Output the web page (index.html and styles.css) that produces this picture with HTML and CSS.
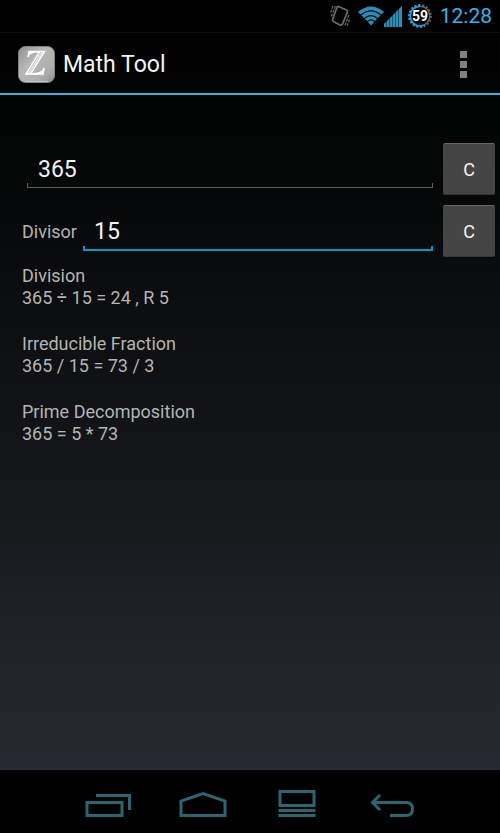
FILE: index.html
```html
<!DOCTYPE html>
<html lang="en">
<head>
    <meta charset="UTF-8">
    <meta name="viewport" content="width=device-width, initial-scale=1">
    <title>Math Tool</title>
    <link rel="stylesheet" href="styles.css">
</head>
<body>
    <!-- Status bar -->
    <div class="status-bar">
        <svg class="vibrate-icon" width="20" height="24" viewBox="0 0 20 24" fill="none" stroke="#6a6a6a">
            <path d="M8.5 2.5 L16.500 6 Q18 7 17.500 8 L12.500 20 Q11.500 21.500 10 21 L3.500 17.500 Q2 16.500 2.500 15.500 L7 3.500 Q7.500 2 8.500 2.500Z" stroke-width="1.800"/>
            <path d="M5.500 2 L1 13 M3 2 L0.500 8.500 M19 11 L14.500 22 M19.500 15.500 L17 22" stroke-width="1.200" stroke-dasharray="3 1"/>
        </svg>
        <svg class="wifi-icon" width="26" height="20" viewBox="0 0 26 20" fill="#2a8fb8">
            <path d="M0 6 Q13 -5 26 6 L23.500 8.500 Q13 0 2.500 8.500Z"/>
            <path d="M3.300 9.300 Q13 1.500 22.700 9.300 L20 12 Q13 6 6 12Z"/>
            <path d="M6.800 12.800 Q13 7.500 19.200 12.800 L17 15 Q13 11.500 9 15Z"/>
            <path d="M9.800 15.800 Q13 13 16.200 15.800 L13 19.500Z"/>
        </svg>
        <svg class="signal-icon" width="18" height="21" viewBox="0 0 18 21" fill="#2a8fb8">
            <path d="M0 21v-3l2-2v5zM3 21v-6l2-2v8zM6 21v-9l2-2v11zM9 21v-12l2-2v14zM12 21v-15l2-2v17zM15 21v-18l3-3v21z"/>
            <path d="M0 21v-3L18 0v21z" opacity="0.6"/>
        </svg>
        <svg class="battery-icon" width="24" height="24" viewBox="0 0 24 24" fill="none">
            <circle cx="12" cy="12" r="9.800" stroke="#666" stroke-width="1.400"/>
            <circle cx="12" cy="12" r="11" stroke="#666" stroke-width="1.800" stroke-dasharray="2 1.840"/>
            <path d="M12 2.200 A9.800 9.800 0 0 0 12 21.800 Q15 21.800 17 20.500" stroke="#1a9fd8" stroke-width="1.400"/>
            <path d="M12 1 A11 11 0 0 0 12 23 A11 11 0 0 0 17 21.800" stroke="#1a9fd8" stroke-width="1.800" stroke-dasharray="2 1.840"/>
            <text class="battery-text" x="12" y="17" text-anchor="middle">59</text>
        </svg>
        <span class="clock">12:28</span>
    </div>

    <!-- Action bar -->
    <header class="action-bar">
        <svg class="app-icon" width="37" height="37" viewBox="0 0 37 37">
            <defs>
                <linearGradient id="iconFill" x1="0" y1="0" x2="1" y2="1">
                    <stop offset="0" stop-color="#919191"/>
                    <stop offset="0.4" stop-color="#b8b8b8"/>
                    <stop offset="0.75" stop-color="#adadad"/>
                    <stop offset="1" stop-color="#8c8c8c"/>
                </linearGradient>
            </defs>
            <rect x="0.500" y="0.500" width="36" height="36" rx="7" fill="url(#iconFill)" stroke="#858585"/>
            <path d="M7 35.500 H30" stroke="#c4c4c4"/>
            <!-- Double-struck Z -->
            <g fill="none" stroke="#fff">
                <path d="M10 11 L11 5.500 H26.500 L12.500 28" stroke-width="1.500"/>
                <path d="M21.500 6 L8 28 H25 L26 22" stroke-width="1.500"/>
                <path d="M24 6 L10.300 28" stroke-width="1"/>
            </g>
            <path d="M11 5 H20 V6.500 Q12.500 6.500 10 11Z M15 28.500 H25 L26.500 21.500 Q23 27 15 27Z" fill="#fff"/>
        </svg>
        <h1 class="app-title">Math Tool</h1>
        <button class="menu-button" type="button" aria-label="More options">
            <span class="menu-dot"></span>
            <span class="menu-dot"></span>
            <span class="menu-dot"></span>
        </button>
    </header>

    <main class="content">
        <div class="input-row number-row">
            <input class="field" type="text" id="number" inputmode="numeric" value="365" aria-label="Number">
            <button class="clear-button" type="button" data-clear="number">C</button>
        </div>
        <div class="input-row">
            <label class="field-label" for="divisor">Divisor</label>
            <input class="field field-active" type="text" id="divisor" inputmode="numeric" value="15">
            <button class="clear-button" type="button" data-clear="divisor">C</button>
        </div>

        <div class="results">
            <section>
                <h2>Division</h2>
                <p>365 ÷ 15 = 24 , R 5</p>
            </section>
            <section>
                <h2>Irreducible Fraction</h2>
                <p>365 / 15 = 73 / 3</p>
            </section>
            <section>
                <h2>Prime Decomposition</h2>
                <p>365 = 5 * 73</p>
            </section>
        </div>
    </main>

    <!-- Navigation bar -->
    <nav class="nav-bar">
        <button class="nav-button" type="button" aria-label="Recent apps">
            <svg width="48" height="32" viewBox="0 0 48 32">
                <path d="M3 16.500 H38 V29.500 H3Z M12 9.500 H45.500 V24"/>
            </svg>
        </button>
        <button class="nav-button" type="button" aria-label="Home">
            <svg width="48" height="32" viewBox="0 0 48 32">
                <path d="M2 29.500 V15 L24 7.500 L46 15 V29.500Z"/>
            </svg>
        </button>
        <button class="nav-button" type="button" aria-label="Menu">
            <svg width="48" height="32" viewBox="0 0 48 32">
                <path d="M7 5.500 H41 V19.500 H7Z M5.500 24.500 H42.500 M5.500 29.500 H42.500"/>
            </svg>
        </button>
        <button class="nav-button" type="button" aria-label="Back">
            <svg width="48" height="32" viewBox="0 0 48 32">
                <path d="M4 16.500 H38 Q44.500 16.500 44.500 23 Q44.500 29.500 38 29.500 H22 M12 9 L4.500 16.500 L12 24"/>
            </svg>
        </button>
    </nav>

    <script>
    // Clear buttons empty the field beside them
    document.querySelectorAll('[data-clear]').forEach(button => {
        button.addEventListener('click', function() {
            document.getElementById(this.dataset.clear).value = '';
        });
    });
    </script>
</body>
</html>
```

FILE: styles.css
```css
* {
    box-sizing: border-box;
}

body {
    display: flex;
    flex-direction: column;
    min-height: 100vh;
    margin: 0;
    background: linear-gradient(#000, #020303 12%, #111315 50%, #272b31 93%);
    color: #b4b4b4;
    font-family: Roboto, sans-serif;
}

h1, h2, p {
    margin: 0;
    font-weight: 400;
}

button {
    border: none;
    cursor: pointer;
    font-family: inherit;
}

.status-bar {
    display: flex;
    align-items: center;
    justify-content: flex-end;
    height: 33px;
    padding-right: 8px;
    background: #000;
    border-bottom: 1px solid #0d0d0d;
}

.wifi-icon {
    margin-left: 8px;
}

.battery-icon {
    margin-left: 6px;
    overflow: visible;
}

.battery-text {
    fill: #fff;
    font-size: 14px;
    font-weight: 700;
}

.clock {
    margin-left: 8px;
    color: #33b5e5;
    font-size: 21px;
}

.action-bar {
    display: flex;
    align-items: center;
    height: 62px;
    padding: 2px 25px 0 18px;
    border-bottom: 2px solid #33b5e5;
}

.app-title {
    flex: 1;
    margin-left: 8px;
    color: #f3f3f3;
    font-size: 23px;
}

.menu-button {
    display: flex;
    flex-direction: column;
    align-items: center;
    gap: 3px;
    padding: 8px;
    background: none;
}

.menu-dot {
    width: 7px;
    height: 7px;
    background: #808080;
}

.content {
    flex: 1;
    padding: 48px 5px 0 22px;
}

.input-row {
    display: flex;
    align-items: center;
    margin-bottom: 10px;
}

.number-row {
    padding-left: 5px;
}

.field-label {
    margin-right: 6px;
    font-size: 18px;
}

/* Underline with a short tick at each end */
.field {
    --line: #5c5c5c;
    --weight: 1px;
    flex: 1;
    min-width: 0;
    height: 38px;
    margin-right: 10px;
    padding: 0 11px;
    border: none;
    outline: none;
    background:
        linear-gradient(var(--line), var(--line)) left bottom / 100% var(--weight) no-repeat,
        linear-gradient(var(--line), var(--line)) left bottom / var(--weight) 5px no-repeat,
        linear-gradient(var(--line), var(--line)) right bottom / var(--weight) 5px no-repeat;
    color: #f3f3f3;
    font-family: inherit;
    font-size: 23px;
}

.field-active {
    --line: #0099cc;
    --weight: 2px;
    height: 40px;
}

.clear-button {
    width: 52px;
    height: 52px;
    border-top: 1px solid #666;
    border-bottom: 1px solid #333;
    border-radius: 2px;
    background: #444;
    color: #f3f3f3;
    font-size: 18px;
}

.results {
    display: grid;
    gap: 24px;
    margin-top: -2px;
    font-size: 18px;
    line-height: 22px;
}

.results h2 {
    font-size: 18px;
}

.nav-bar {
    display: flex;
    height: 63px;
    padding: 0 61px;
    background: #000;
}

.nav-button {
    flex: 1;
    padding: 0;
    background: none;
}

.nav-button svg {
    display: block;
    margin: 0 auto;
    fill: none;
    stroke: #2b6570;
    stroke-width: 3;
}
```
